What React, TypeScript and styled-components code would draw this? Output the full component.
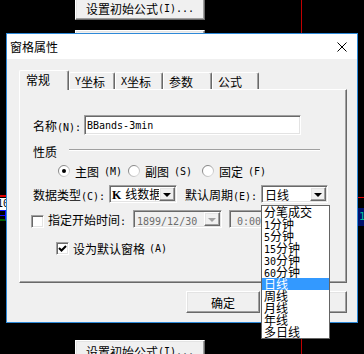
import React from "react";
import styled, { createGlobalStyle, css } from "styled-components";

const GlobalStyle = createGlobalStyle`
  html, body { margin: 0; padding: 0; background: #000; }
  body { width: 364px; height: 354px; overflow: hidden; }
  * { box-sizing: border-box; }
`;

const sunken = css`
  border-style: solid;
  border-width: 1px;
  border-color: #a0a0a0 #ffffff #ffffff #a0a0a0;
  box-shadow: inset 1px 1px 0 #696969, inset -1px -1px 0 #e3e3e3;
`;

const raised = css`
  border-style: solid;
  border-width: 1px;
  border-color: #ffffff #696969 #696969 #ffffff;
  box-shadow: inset -1px -1px 0 #a0a0a0, inset 1px 1px 0 #e3e3e3;
  background: #f0f0f0;
`;

const Desktop = styled.div`
  position: relative;
  width: 364px;
  height: 354px;
  background: #000;
  overflow: hidden;
  font-family: "Noto Sans CJK SC", "Noto Sans", sans-serif;
  font-size: 12px;
  color: #000;
`;

const Ascii = styled.span`
  font-family: "DejaVu Sans Mono", "Liberation Mono", monospace;
  font-size: 10px;
`;

function T({ children }: { children: string }) {
  const parts = children.split(/([\x20-\x7e]+)/).filter(Boolean);
  return (
    <>
      {parts.map((p, i) =>
        /^[\x20-\x7e]+$/.test(p) ? <Ascii key={i}>{p}</Ascii> : <React.Fragment key={i}>{p}</React.Fragment>
      )}
    </>
  );
}

/* ---------- background canvas pieces ---------- */
const CursorLine = styled.div`
  position: absolute;
  left: 301px;
  top: 0;
  width: 1px;
  height: 354px;
  background: #c00000;
`;

const BgButton = styled.div<{ $top: number }>`
  position: absolute;
  left: 75px;
  top: ${(p) => p.$top}px;
  width: 130px;
  height: 23px;
  ${raised};
  display: flex;
  align-items: center;
  justify-content: center;
  white-space: nowrap;
`;

const PriceLine = styled.div<{ $left: number; $top: number; $h: number }>`
  position: absolute;
  left: ${(p) => p.$left}px;
  top: ${(p) => p.$top}px;
  width: 8px;
  height: ${(p) => p.$h}px;
  background: #e00000;
`;

const PriceTag = styled.div`
  position: absolute;
  left: -3px;
  top: 198px;
  width: 10px;
  height: 12px;
  background: #fff;
  color: #000;
  font-family: "DejaVu Sans Mono", monospace;
  font-size: 10px;
  line-height: 12px;
`;

const GridBlock = styled.div<{ $left: number; $top: number }>`
  position: absolute;
  left: ${(p) => p.$left}px;
  top: ${(p) => p.$top}px;
  width: 10px;
  height: 11px;
  border: 1px solid #1010ff;
  border-bottom: 2px solid #006000;
  background: linear-gradient(#000 0 4px, #1010ff 4px 5px, #000 5px);
`;

const GreenTick = styled.div`
  position: absolute;
  left: 358px;
  top: 208px;
  width: 8px;
  height: 18px;
  background: #00106a;
  color: #00c0a0;
  font-family: "DejaVu Sans Mono", monospace;
  font-size: 11px;
  line-height: 18px;
  padding-left: 1px;
`;

/* ---------- window ---------- */
const Window = styled.div`
  position: absolute;
  left: 6px;
  top: 33px;
  width: 352px;
  height: 290px;
  border: 1px solid #2d89d8;
  background: #f0f0f0;
  display: flex;
  flex-direction: column;
`;

const TitleBar = styled.div`
  height: 25px;
  flex-shrink: 0;
  background: #fff;
  display: flex;
  align-items: center;
  justify-content: space-between;
  padding: 0 10px 0 3px;
`;

const Body = styled.div`
  flex: 1;
  display: flex;
  flex-direction: column;
  padding: 11px 10px 0 12px;
`;

const TabStrip = styled.div`
  display: flex;
  align-items: flex-end;
  height: 19px;
  position: relative;
  z-index: 2;
`;

const Tab = styled.div<{ $active?: boolean; $w: number }>`
  width: ${(p) => p.$w}px;
  height: ${(p) => (p.$active ? 20 : 17)}px;
  margin-bottom: ${(p) => (p.$active ? -1 : 0)}px;
  padding: ${(p) => (p.$active ? "0 0 3px 6px" : "0 0 0 5px")};
  background: #f0f0f0;
  border-top: 1px solid #fff;
  border-left: 1px solid #fff;
  border-right: 1px solid #696969;
  box-shadow: inset -1px 0 0 #a0a0a0;
  border-radius: 2px 2px 0 0;
  display: flex;
  align-items: center;
  white-space: nowrap;
`;

const Panel = styled.div`
  width: 328px;
  height: 194px;
  flex-shrink: 0;
  border-style: solid;
  border-width: 1px;
  border-color: #fff #696969 #696969 #fff;
  box-shadow: inset -1px -1px 0 #a0a0a0;
  display: flex;
  flex-direction: column;
  padding-left: 11px;
`;

const Row = styled.div<{ $mt: number; $h: number; $pl?: number }>`
  display: flex;
  align-items: center;
  margin-top: ${(p) => p.$mt}px;
  height: ${(p) => p.$h}px;
  padding-left: ${(p) => p.$pl ?? 0}px;
  flex-shrink: 0;
`;

const Label = styled.span<{ $w?: number; $ml?: number }>`
  width: ${(p) => (p.$w ? `${p.$w}px` : "auto")};
  margin-left: ${(p) => p.$ml ?? 0}px;
  flex-shrink: 0;
  white-space: nowrap;
`;

const TextInput = styled.div<{ $w: number }>`
  width: ${(p) => p.$w}px;
  height: 100%;
  ${sunken};
  background: #fff;
  display: flex;
  align-items: center;
  padding-left: 2px;
  white-space: nowrap;
`;

const GroupRule = styled.div`
  flex: 1;
  height: 2px;
  align-self: flex-start;
  margin: 6px 26px 0 12px;
  border-top: 1px solid #a0a0a0;
  border-bottom: 1px solid #fff;
`;

const RadioItem = styled.label<{ $w?: number }>`
  width: ${(p) => (p.$w ? `${p.$w}px` : "auto")};
  display: flex;
  align-items: center;
  gap: 5px;
  white-space: nowrap;
`;

const Combo = styled.div<{ $w: number; $disabled?: boolean; $ml?: number }>`
  width: ${(p) => p.$w}px;
  height: 18px;
  flex-shrink: 0;
  margin-left: ${(p) => p.$ml ?? 0}px;
  ${sunken};
  background: ${(p) => (p.$disabled ? "#f0f0f0" : "#fff")};
  color: ${(p) => (p.$disabled ? "#6d6d6d" : "#000")};
  display: flex;
  align-items: center;
  padding: 1px;
`;

const ComboValue = styled.div<{ $pl: number }>`
  flex: 1;
  overflow: hidden;
  white-space: nowrap;
  padding-left: ${(p) => p.$pl}px;
`;

const ComboButton = styled.div<{ $disabled?: boolean }>`
  width: 16px;
  height: 14px;
  flex-shrink: 0;
  ${raised};
  display: flex;
  align-items: center;
  justify-content: center;
  &::after {
    content: "";
    border-left: 4px solid transparent;
    border-right: 4px solid transparent;
    border-top: 4px solid ${(p) => (p.$disabled ? "#a0a0a0" : "#000")};
    margin-top: 1px;
  }
`;

const KMark = styled.span`
  font-family: "Liberation Serif", serif;
  font-weight: bold;
  font-size: 12px;
  margin-right: 4px;
`;

const CheckBox = styled.span<{ $nudge?: number }>`
  width: 13px;
  height: 13px;
  flex-shrink: 0;
  ${sunken};
  background: #fff;
  display: flex;
  align-items: center;
  justify-content: center;
  margin-top: ${(p) => p.$nudge ?? 0}px;
`;

const CheckLabel = styled.label`
  display: flex;
  align-items: center;
  gap: 4px;
  white-space: nowrap;
`;

const ButtonRow = styled.div`
  display: flex;
  justify-content: flex-end;
  gap: 6px;
  margin-top: 8px;
  height: 22px;
`;

const PushButton = styled.div<{ $w: number }>`
  width: ${(p) => p.$w}px;
  height: 22px;
  ${raised};
  display: flex;
  align-items: center;
  justify-content: center;
`;

const DropList = styled.ul`
  position: absolute;
  left: 261px;
  top: 205px;
  width: 69px;
  height: 134px;
  margin: 0;
  padding: 0;
  list-style: none;
  background: #fff;
  border: 1px solid #646464;
  z-index: 5;
`;

const DropItem = styled.li<{ $sel?: boolean }>`
  height: 12px;
  line-height: 12px;
  padding-left: 2px;
  white-space: nowrap;
  background: ${(p) => (p.$sel ? "#3399ff" : "transparent")};
  color: ${(p) => (p.$sel ? "#fff" : "#000")};
`;

function Radio({ checked }: { checked?: boolean }) {
  return (
    <svg width="12" height="12" viewBox="0 0 12 12">
      <defs>
        <linearGradient id="rg" x1="0" y1="0" x2="1" y2="1">
          <stop offset="0" stopColor="#696969" />
          <stop offset="1" stopColor="#e8e8e8" />
        </linearGradient>
      </defs>
      <circle cx="6" cy="6" r="5.5" fill="#fff" stroke="url(#rg)" />
      {checked && <circle cx="6" cy="6" r="2" fill="#000" />}
    </svg>
  );
}

function Check() {
  return (
    <svg width="9" height="9" viewBox="0 0 9 9">
      <path d="M1 4 L3.5 6.5 L8 2" fill="none" stroke="#000" strokeWidth="2" />
    </svg>
  );
}

const periods = ["分笔成交", "1分钟", "5分钟", "15分钟", "30分钟", "60分钟", "日线", "周线", "月线", "年线", "多日线"];

export default function App() {
  return (
    <Desktop>
      <GlobalStyle />
      <CursorLine />
      <BgButton $top={-3}>
        <T>设置初始公式(I)...</T>
      </BgButton>
      <BgButton $top={30}>
        <T>设置初始公式(I)...</T>
      </BgButton>
      <BgButton $top={340}>
        <T>设置初始公式(I)...</T>
      </BgButton>

      <PriceLine $left={-2} $top={195} $h={2} />
      <PriceTag>10</PriceTag>
      <GridBlock $left={-4} $top={210} />
      <PriceLine $left={358} $top={197} $h={1} />
      <GreenTick>1</GreenTick>

      <Window>
        <TitleBar>
          <span>窗格属性</span>
          <svg width="10" height="10" viewBox="0 0 10 10">
            <path d="M0.5 0.5 L9.5 9.5 M9.5 0.5 L0.5 9.5" stroke="#000" strokeWidth="1" />
          </svg>
        </TitleBar>
        <Body>
          <TabStrip>
            <Tab $active $w={50}>常规</Tab>
            <Tab $w={46}><T>Y坐标</T></Tab>
            <Tab $w={48}><T>X坐标</T></Tab>
            <Tab $w={49}>参数</Tab>
            <Tab $w={47}>公式</Tab>
          </TabStrip>
          <Panel>
            <Row $mt={25} $h={20} $pl={2}>
              <Label $w={51}><T>名称(N):</T></Label>
              <TextInput $w={217}><Ascii>BBands-3min</Ascii></TextInput>
            </Row>
            <Row $mt={8} $h={16} $pl={2}>
              <Label>性质</Label>
              <GroupRule />
            </Row>
            <Row $mt={5} $h={14} $pl={27}>
              <RadioItem $w={70}>
                <Radio checked />
                <T>主图(M)</T>
              </RadioItem>
              <RadioItem $w={74}>
                <Radio />
                <T>副图(S)</T>
              </RadioItem>
              <RadioItem>
                <Radio />
                <T>固定(F)</T>
              </RadioItem>
            </Row>
            <Row $mt={7} $h={18} $pl={2}>
              <Label $w={76}><T>数据类型(C):</T></Label>
              <Combo $w={68}>
                <ComboValue $pl={1}>
                  <KMark>K</KMark>线数据
                </ComboValue>
                <ComboButton />
              </Combo>
              <Label $w={76} $ml={8}><T>默认周期(E):</T></Label>
              <Combo $w={67}>
                <ComboValue $pl={2}>日线</ComboValue>
                <ComboButton />
              </Combo>
            </Row>
            <Row $mt={7} $h={18}>
              <CheckLabel>
                <CheckBox $nudge={5} />
                <Label $w={85}><T>指定开始时间:</T></Label>
              </CheckLabel>
              <Combo $w={89} $disabled>
                <ComboValue $pl={2}><Ascii>1899/12/30</Ascii></ComboValue>
                <ComboButton $disabled />
              </Combo>
              <Combo $w={80} $disabled $ml={7}>
                <ComboValue $pl={6}><Ascii>0:00:00</Ascii></ComboValue>
              </Combo>
            </Row>
            <Row $mt={13} $h={14} $pl={25}>
              <CheckLabel>
                <CheckBox>
                  <Check />
                </CheckBox>
                <T>设为默认窗格(A)</T>
              </CheckLabel>
            </Row>
          </Panel>
          <ButtonRow>
            <PushButton $w={74}>确定</PushButton>
            <PushButton $w={81}>取消</PushButton>
          </ButtonRow>
        </Body>
      </Window>

      <DropList>
        {periods.map((p) => (
          <DropItem key={p} $sel={p === "日线"}>
            <T>{p}</T>
          </DropItem>
        ))}
      </DropList>
    </Desktop>
  );
}
